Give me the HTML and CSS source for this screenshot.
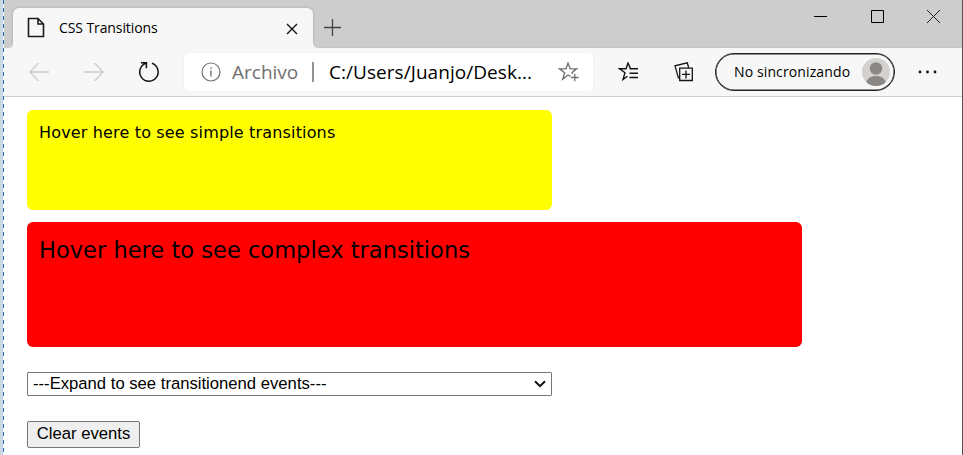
FILE: index.html
```html
<!DOCTYPE html>
<html lang="es">
<head>
<meta charset="utf-8">
<title>CSS Transitions</title>
<link rel="stylesheet" href="styles.css">
</head>
<body>
<div class="edge"></div>
<div class="dashes"></div>
<div class="window">
  <header class="tabstrip">
    <svg class="flare" width="6" height="6" viewBox="0 0 6 6"><path d="M6 0Q6 6 0 6H6z" fill="#f7f7f7"/></svg>
    <div class="tab">
      <svg class="doc" width="18" height="22" viewBox="0 0 18 22" fill="none" stroke="#1b1b1b" stroke-width="1.6"><path d="M1.500 1.500h9.500l5.500 5.500v12.500h-15z M11 1.500v5.500h5.500"/></svg>
      <span class="tab-title">CSS Transitions</span>
      <svg class="tab-close" width="12" height="12" viewBox="0 0 12 12" stroke="#111" stroke-width="1.4"><path d="M1 1l10 10M11 1L1 11"/></svg>
    </div>
    <svg class="flare" width="6" height="6" viewBox="0 0 6 6"><path d="M0 0Q0 6 6 6H0z" fill="#f7f7f7"/></svg>
    <svg class="plus" width="17" height="17" viewBox="0 0 17 17" stroke="#444" stroke-width="1.3"><path d="M8.5 0v17M0 8.5h17"/></svg>
    <div class="controls">
      <svg width="13" height="13" viewBox="0 0 13 13" stroke="#000"><path d="M0 6.5h13"/></svg>
      <svg width="13" height="13" viewBox="0 0 13 13" fill="none" stroke="#000"><path d="M.5.5h12v12H.5z"/></svg>
      <svg width="13" height="13" viewBox="0 0 13 13" stroke="#222"><path d="M0 0l13 13M13 0L0 13"/></svg>
    </div>
  </header>
  <nav class="toolbar">
    <svg class="back" width="20" height="18" viewBox="0 0 20 18" fill="none" stroke="#cbcbcb" stroke-width="1.3"><path d="M20 9H1M9.500 0L.8 9l8.700 9"/></svg>
    <svg class="forward" width="20" height="18" viewBox="0 0 20 18" fill="none" stroke="#cbcbcb" stroke-width="1.3"><path d="M0 9h19M10.500 0l8.700 9-8.700 9"/></svg>
    <svg class="reload" width="22" height="22" viewBox="0 0 22 22" fill="none" stroke="#111" stroke-width="1.5"><path d="M14 2.300A9.200 9.200 0 1 1 7.600 2.400M3 1.800h5.400v5.400"/></svg>
    <div class="address">
      <svg class="info" width="20" height="20" viewBox="0 0 20 20" fill="none" stroke="#737373" stroke-width="1.2"><circle cx="10" cy="10" r="9"/><path d="M10 8.500v6M10 5.300v1.500" stroke-width="1.400"/></svg>
      <span class="scheme">Archivo</span>
      <span class="divider"></span>
      <span class="url">C:/Users/Juanjo/Desk...</span>
      <svg class="star-add" width="22" height="20" viewBox="0 0 22 20" fill="none" stroke="#707070" stroke-width="1.300"><path d="M12.500 14.500L10 13l-5.300 4.200 2-6.500L1.300 6.800H8L10 1l2.200 5.800h6.500L14 10.400l.5 1.600M16.800 11.800v7.400M13 15.500h7.600"/></svg>
    </div>
    <svg class="favorites" width="22" height="20" viewBox="0 0 22 20" fill="none" stroke="#151515" stroke-width="1.400"><path d="M18.500 6.800h-6L10 1 8 6.800H1.500L7 10.700l-2 6.700 4.500-3.200M11.500 6.800H20M11.500 11.200H20M11.500 15.500H20"/></svg>
    <svg class="collections" width="20" height="20" viewBox="0 0 20 20" fill="none" stroke="#151515" stroke-width="1.300"><path d="M5.700 6.200h12.600v12.300H5.700zM12 8.400v8M8 12.400h8M4.500 16.400L1 3.800 13.300.9l1.300 4.600"/></svg>
    <div class="profile">
      <span class="profile-name">No sincronizando</span>
      <svg width="28" height="28" viewBox="0 0 28 28"><circle cx="14" cy="14" r="14" fill="#d4d2cf"/><circle cx="14" cy="10.500" r="6.200" fill="#8b8785"/><path d="M4.200 24C6 19.500 10 18 14 18s8 1.500 9.800 6A14 14 0 0 1 4.200 24z" fill="#8b8785"/></svg>
    </div>
    <svg class="more" width="19" height="4" viewBox="0 0 19 4" fill="#111"><circle cx="2" cy="2" r="1.400"/><circle cx="9.500" cy="2" r="1.400"/><circle cx="17" cy="2" r="1.400"/></svg>
  </nav>
  <main class="page">
    <div class="box simple"><span>Hover here to see simple transitions</span></div>
    <div class="box complex"><span>Hover here to see complex transitions</span></div>
    <div class="events">
      <span class="events-label">---Expand to see transitionend events---</span>
      <svg width="12" height="8" viewBox="0 0 12 8" fill="none" stroke="#111" stroke-width="2"><path d="M1 1.200l5 5 5-5"/></svg>
    </div>
    <button class="clear" type="button"><span>Clear events</span></button>
  </main>
</div>
</body>
</html>
```
FILE: styles.css
```css
* { box-sizing: border-box; }
body {
  margin: 0;
  width: 963px;
  height: 455px;
  display: flex;
  overflow: hidden;
  background: #fff;
  color: #000;
}
svg { display: block; flex: none; }
span { white-space: nowrap; }
.edge { width: 3px; background: #cdd6e6; }
.dashes {
  width: 1px;
  background: repeating-linear-gradient(#1a70b8 0 4px, #fff 4px 8px);
}
.window {
  width: 959px;
  border-right: 1px solid #555;
  font-family: "Open Sans", "Noto Sans", sans-serif;
}
.tabstrip {
  height: 48px;
  padding-top: 8px;
  padding-left: 3px;
  display: flex;
  align-items: flex-start;
  overflow: hidden;
  background: linear-gradient(#cdcdcd 46px, #c3c3c3 48px);
}
.tab {
  width: 300px;
  height: 40px;
  padding-left: 14px;
  padding-right: 15px;
  display: flex;
  align-items: center;
  border-radius: 6px 6px 0 0;
  background: #f7f7f7;
  box-shadow: 0 0 3px rgba(0, 0, 0, .2);
}
.tab-title {
  margin: -2px 0 0 14px;
  font-size: 14px;
  letter-spacing: -.1px;
}
.tab-close { margin-left: auto; margin-top: 2px; }
.flare { margin-top: 34px; }
.plus { margin: 11px 0 0 5px; }
.controls { margin: 2px 22px 0 auto; display: flex; gap: 43.500px; }
.toolbar {
  height: 49px;
  padding-left: 25px;
  display: flex;
  align-items: center;
  background: #f7f7f7;
  border-bottom: 1px solid #cfcfcf;
}
.forward { margin-left: 35px; }
.reload { margin-left: 34px; }
.address {
  width: 409px;
  height: 38px;
  margin-left: 24px;
  padding-left: 17px;
  display: flex;
  align-items: center;
  border-radius: 5px;
  background: #fff;
  box-shadow: 0 0 3px rgba(0, 0, 0, .05);
  font-size: 19px;
}
.scheme { width: 67px; margin-left: 11px; color: #707070; }
.divider { width: 2px; height: 20px; margin-left: 13px; background: #929292; }
.url { width: 203px; margin-left: 15px; letter-spacing: .050px; }
.star-add { margin-left: 26px; }
.favorites { margin-left: 25px; }
.collections { margin-left: 34px; }
.profile {
  width: 180px;
  height: 38px;
  margin-left: 21px;
  padding: 0 4px 0 18px;
  display: flex;
  align-items: center;
  justify-content: space-between;
  border: 1px solid #222;
  border-radius: 19px;
  box-shadow: inset 0 0 0 .500px #222;
  font-size: 14px;
}
.profile-name { margin-top: -2px; letter-spacing: .120px; }
.more { margin-left: 23px; }
.page { padding: 13px 0 0 23px; }
.box {
  border-radius: 6px;
  font-family: "DejaVu Sans", sans-serif;
}
.simple {
  width: 525px;
  height: 100px;
  padding: 13px 12px;
  background: #ff0;
  font-size: 16px;
  line-height: 20px;
  letter-spacing: .160px;
}
.complex {
  width: 775px;
  height: 125px;
  margin-top: 12px;
  padding: 14px 12px;
  background: #f00;
  font-size: 22.500px;
  line-height: 28px;
  letter-spacing: .030px;
}
.events {
  width: 525px;
  height: 24px;
  margin-top: 25px;
  padding: 0 5px;
  display: flex;
  align-items: center;
  justify-content: space-between;
  border: 1px solid #767676;
  border-radius: 1px;
  font: 16.670px/22px "Liberation Sans", sans-serif;
}
.clear {
  display: block;
  width: 113px;
  height: 27px;
  margin-top: 25px;
  padding: 0 0 2px;
  border: 1px solid #767676;
  border-radius: 2px;
  background: #efefef;
  color: #000;
  font: 16.670px/23px "Liberation Sans", sans-serif;
}
```
